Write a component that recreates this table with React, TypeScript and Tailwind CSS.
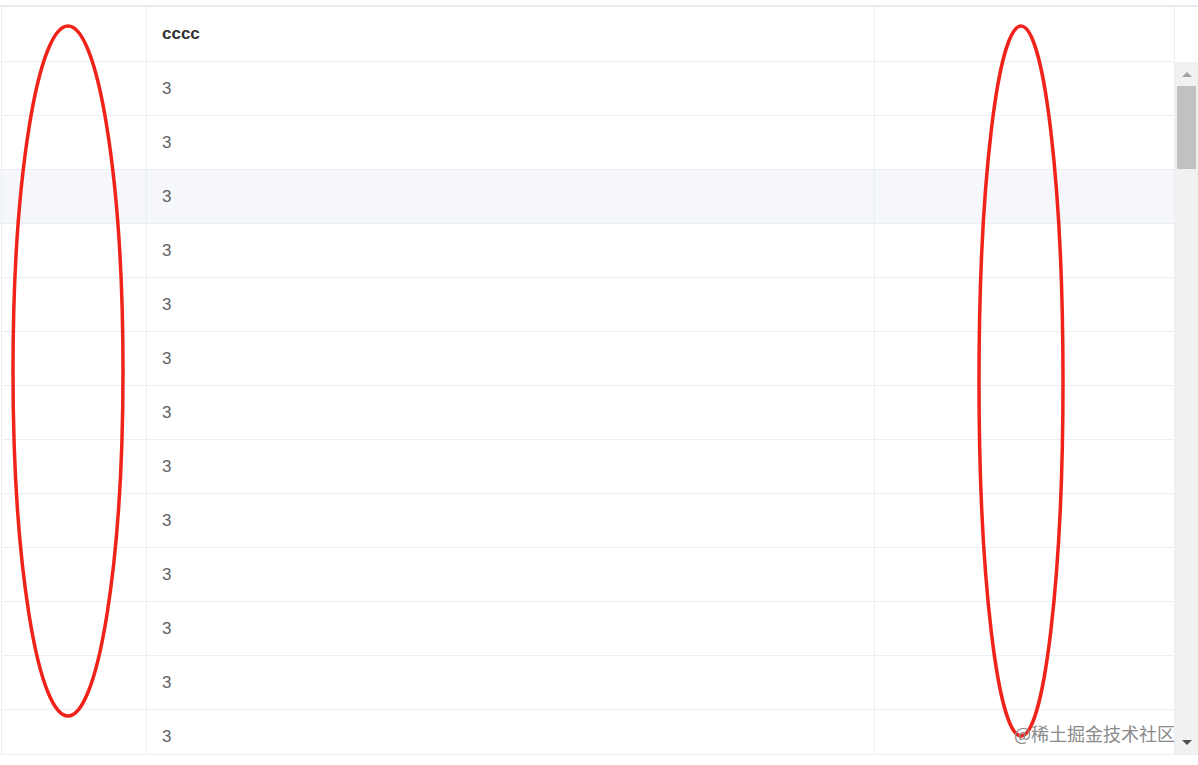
import React from 'react';

const ROWS = Array.from({ length: 13 }, (_, i) => ({ id: i, value: '3' }));
const HOVER_ROW = 2;

const ScrollArrow = ({ dir }: { dir: 'up' | 'down' }) => (
  <div className="h-[24px] flex items-center justify-center">
    <div
      className={
        dir === 'up'
          ? 'w-0 h-0 border-l-[5px] border-r-[5px] border-b-[5px] border-l-transparent border-r-transparent border-b-[#a3a3a3]'
          : 'w-0 h-0 border-l-[5px] border-r-[5px] border-t-[5px] border-l-transparent border-r-transparent border-t-[#505050]'
      }
    />
  </div>
);

export default function App() {
  return (
    <div className="relative w-[1198px] h-[765px] bg-white overflow-hidden font-['Liberation_Sans',Arial,sans-serif] text-[17px]">
      <div className="pt-[5px]">
        <div className="border-t-2 border-[#e9ebef]">
          {/* header */}
          <div className="flex h-[55px]">
            <div className="w-[146px] border-l border-r border-b border-[#ebeef5] ml-px" />
            <div className="w-[728px] border-r border-b border-[#ebeef5] flex items-center pl-[15px] font-bold text-[#303133]">
              cccc
            </div>
            <div className="w-[300px] border-r border-b border-[#ebeef5]" />
            <div className="flex-1" />
          </div>
          {/* body */}
          <div className="flex h-[693px] border-b border-[#ebeef5]">
            <div className="w-[1175px] overflow-hidden">
              {ROWS.map((r) => (
                <div
                  key={r.id}
                  className={`flex h-[54px] ${r.id === HOVER_ROW ? 'bg-[#f5f7fa]' : 'bg-white'}`}
                >
                  <div className="w-[146px] ml-px border-l border-r border-b border-[#ebeef5]" />
                  <div className="w-[728px] border-r border-b border-[#ebeef5] flex items-center pl-[15px] text-[#606266]">
                    {r.value}
                  </div>
                  <div className="flex-1 border-r border-b border-[#ebeef5]" />
                </div>
              ))}
            </div>
            {/* scrollbar */}
            <div className="flex-1 bg-[#f1f1f1] flex flex-col">
              <ScrollArrow dir="up" />
              <div className="mx-[2px] h-[83px] bg-[#c1c1c1]" />
              <div className="flex-1" />
              <ScrollArrow dir="down" />
            </div>
          </div>
        </div>
      </div>

      {/* annotation ellipses */}
      <svg className="absolute inset-0 pointer-events-none" width="1198" height="765">
        <ellipse cx="68" cy="371" rx="55" ry="345" fill="none" stroke="#f0231a" strokeWidth="3.5" />
        <ellipse cx="1021" cy="381" rx="42" ry="355" fill="none" stroke="#f0231a" strokeWidth="3.5" />
      </svg>

      {/* watermark */}
      <div className="absolute left-[1014px] top-[721px] text-[18px] leading-[24px] text-[#8a8a8a] font-['Noto_Sans_CJK_SC',sans-serif]">
        @稀土掘金技术社区
      </div>
    </div>
  );
}
